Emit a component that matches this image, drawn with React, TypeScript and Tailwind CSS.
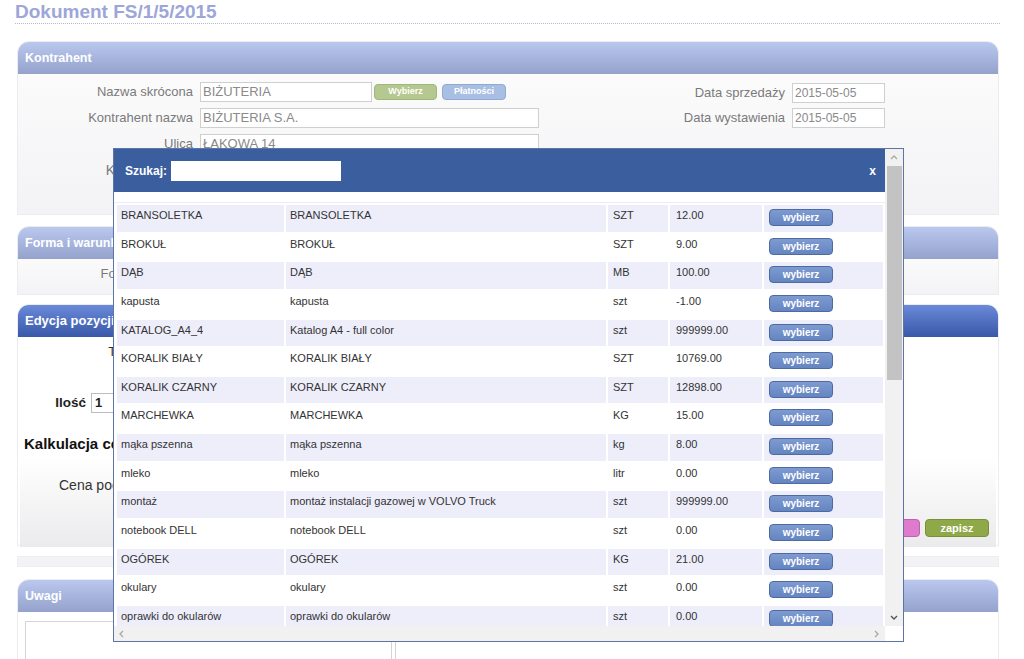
import React from 'react'

const produkty = [
  ['BRANSOLETKA', 'BRANSOLETKA', 'SZT', '12.00'],
  ['BROKUŁ', 'BROKUŁ', 'SZT', '9.00'],
  ['DĄB', 'DĄB', 'MB', '100.00'],
  ['kapusta', 'kapusta', 'szt', '-1.00'],
  ['KATALOG_A4_4', 'Katalog A4 - full color', 'szt', '999999.00'],
  ['KORALIK BIAŁY', 'KORALIK BIAŁY', 'SZT', '10769.00'],
  ['KORALIK CZARNY', 'KORALIK CZARNY', 'SZT', '12898.00'],
  ['MARCHEWKA', 'MARCHEWKA', 'KG', '15.00'],
  ['mąka pszenna', 'mąka pszenna', 'kg', '8.00'],
  ['mleko', 'mleko', 'litr', '0.00'],
  ['montaż', 'montaż instalacji gazowej w VOLVO Truck', 'szt', '999999.00'],
  ['notebook DELL', 'notebook DELL', 'szt', '0.00'],
  ['OGÓREK', 'OGÓREK', 'KG', '21.00'],
  ['okulary', 'okulary', 'szt', '0.00'],
  ['oprawki do okularów', 'oprawki do okularów', 'szt', '0.00'],
]

function Naglowek({ tytul, ciemny }: { tytul: string; ciemny?: boolean }) {
  return (
    <div
      className={`h-[32px] rounded-t-[11px] flex items-center pl-[7px] text-white font-bold ${
        ciemny
          ? 'bg-linear-to-b from-[#6a89d8] to-[#3a58a8] text-[13px]'
          : 'bg-linear-to-b from-[#bac8f0] to-[#95a3cc] text-[12.5px]'
      }`}
    >
      {tytul}
    </div>
  )
}

function Pole({ etykieta, wartosc, szer, duza }: { etykieta: string; wartosc: string; szer: string; duza?: boolean }) {
  return (
    <div className="flex items-center h-[20px]">
      <span className={`w-[182px] text-right text-[#7a7a7a] pr-[7px] ${duza ? 'text-[14px]' : 'text-[13px]'}`}>{etykieta}</span>
      <div className={`${szer} h-[20px] border border-[#cfcfcf] bg-white text-[13px] leading-[18px] text-[#8a8a8a] pl-[2px]`}>
        {wartosc}
      </div>
    </div>
  )
}

function Strzalka({ kier }: { kier: 'up' | 'down' | 'left' | 'right' }) {
  const d = {
    up: 'M1 5 L4 2 L7 5',
    down: 'M1 2 L4 5 L7 2',
    left: 'M5 1 L2 4 L5 7',
    right: 'M2 1 L5 4 L2 7',
  }[kier]
  return (
    <svg width="8" height="8" viewBox="0 0 8 8">
      <path d={d} fill="none" stroke={kier === 'down' ? '#505050' : '#a8a8a8'} strokeWidth="1.3" />
    </svg>
  )
}

export default function App() {
  return (
    <div className="relative h-[659px] overflow-hidden bg-white font-['Liberation_Sans',Arial,sans-serif]">
      {/* Tytuł */}
      <div className="ml-[15px] w-[985px] pt-[1px]">
        <h1 className="text-[19px] leading-[22px] font-bold text-[#9ca6d8] border-b border-dotted border-[#b4b8d0]">
          Dokument FS/1/5/2015
        </h1>
      </div>

      <div className="ml-[17px] w-[982px]">
        {/* Kontrahent */}
        <div className="mt-[17px] border border-[#ececf0] rounded-t-[12px]">
          <Naglowek tytul="Kontrahent" />
          <div className="h-[140px] bg-linear-to-b from-[#fbfbfc] to-[#f3f3f5] flex">
            <div className="w-[590px] pt-[8px] flex flex-col gap-[6px]">
              <div className="flex items-center">
                <Pole etykieta="Nazwa skrócona" wartosc="BIŻUTERIA" szer="w-[172px]" />
                <button className="ml-[2px] w-[63px] h-[16px] rounded-[4px] border border-[#a2b67c] bg-[#b5c88f] text-white font-bold text-[9px]">
                  Wybierz
                </button>
                <button className="ml-[5px] w-[64px] h-[16px] rounded-[4px] border border-[#91aad2] bg-[#a8bfe3] text-white font-bold text-[9px]">
                  Płatności
                </button>
              </div>
              <Pole etykieta="Kontrahent nazwa" wartosc="BIŻUTERIA S.A." szer="w-[339px]" />
              <Pole etykieta="Ulica" wartosc="ŁĄKOWA 14" szer="w-[339px]" />
              <Pole etykieta="Kod pocztowy" wartosc="00-950" szer="w-[80px]" duza />
              <Pole etykieta="NIP" wartosc="" szer="w-[160px]" />
            </div>
            <div className="pt-[9px] flex flex-col gap-[5px]">
              <div className="flex items-center h-[20px]">
                <span className="w-[184px] text-right pr-[7px] text-[13px] text-[#7a7a7a]">Data sprzedaży</span>
                <div className="w-[93px] h-[20px] border border-[#cfcfcf] bg-white text-[12px] leading-[18px] text-[#8a8a8a] pl-[2px]">
                  2015-05-05
                </div>
              </div>
              <div className="flex items-center h-[20px]">
                <span className="w-[184px] text-right pr-[7px] text-[13px] text-[#7a7a7a]">Data wystawienia</span>
                <div className="w-[93px] h-[20px] border border-[#cfcfcf] bg-white text-[12px] leading-[18px] text-[#8a8a8a] pl-[2px]">
                  2015-05-05
                </div>
              </div>
            </div>
          </div>
        </div>

        {/* Forma i warunki */}
        <div className="mt-[11px] border border-[#ececf0] rounded-t-[12px]">
          <Naglowek tytul="Forma i warunki płatności" />
          <div className="h-[35px] bg-linear-to-b from-[#fbfbfc] to-[#f3f3f5] pt-[5px]">
            <Pole etykieta="Forma płatności" wartosc="przelew" szer="w-[120px]" />
          </div>
        </div>

        {/* Edycja pozycji */}
        <div className="mt-[9px] border border-[#ececf0] rounded-t-[12px]">
          <Naglowek tytul="Edycja pozycji" ciemny />
          <div className="h-[208px] bg-white pt-[5px]">
            <div className="flex items-center h-[20px]">
              <span className="w-[132px] text-right pr-[7px] text-[13px] text-[#333]">Towar</span>
              <div className="w-[300px] h-[20px] border border-[#cfcfcf]" />
            </div>
            <div className="flex items-center h-[20px] mt-[31px]">
              <span className="w-[73px] text-right pr-[5px] text-[13.5px] font-bold text-[#222]">Ilość</span>
              <div className="w-[60px] h-[20px] border border-[#bdbdbd] text-[13px] font-bold leading-[18px] pl-[3px] text-[#222]">
                1
              </div>
            </div>
            <h3 className="ml-[6px] mt-[21px] text-[15px] leading-[20px] font-bold text-[#111]">Kalkulacja ceny</h3>
            <div className="mt-[3px] mx-[2px] h-[90px] bg-linear-to-b from-[#ffffff] to-[#ebebed]">
              <div className="pl-[39px] pt-[18px] text-[14px] text-[#333]">Cena początkowa</div>
              <div className="flex justify-end gap-[5px] pr-[7px] mt-[23px]">
                <button className="w-[64px] h-[18px] rounded-[4px] border border-[#c25fae] bg-[#de7bcc] text-white font-bold text-[11px]">
                  anuluj
                </button>
                <button className="w-[64px] h-[18px] rounded-[4px] border border-[#7a9036] bg-[#8fa848] text-white font-bold text-[11px]">
                  zapisz
                </button>
              </div>
            </div>
          </div>
        </div>

        <div className="mt-[10px] h-[11px] bg-[#f3f3f5] border border-[#eeeef1]" />

        {/* Uwagi */}
        <div className="mt-[12px] border border-[#ececf0] rounded-t-[12px]">
          <Naglowek tytul="Uwagi" />
          <div className="h-[80px] bg-white pt-[9px] pl-[7px] flex gap-[3px]">
            <div className="w-[367px] h-[70px] border border-[#d4d4d4]" />
            <div className="w-[360px] h-[70px] border-l border-[#d4d4d4]" />
          </div>
        </div>
      </div>

      {/* Okno wyboru towaru */}
      <div className="absolute left-[113px] top-[148px] w-[791px] h-[494px] border border-[#5c74a6] bg-white flex flex-col">
        <div className="flex h-[477px]">
          <div className="w-[771px] overflow-hidden">
            <div className="h-[43px] bg-[#3b5e9e] flex items-center pl-[11px] pr-[9px]">
              <span className="text-white font-bold text-[12px]">Szukaj:</span>
              <div className="ml-[4px] w-[170px] h-[20px] bg-white" />
              <span className="ml-auto text-white font-bold text-[12px]">x</span>
            </div>
            <div className="mt-[10px] h-px bg-[#eceef3]" />
            <table className="ml-[1px] border-separate border-spacing-[2px] text-[11px] text-[#333]">
              <tbody>
                {produkty.map((p, i) => (
                  <tr key={i} className={i % 2 === 0 ? 'bg-[#eeeefb]' : 'bg-white'}>
                    <td className="w-[167px] h-[26.65px] align-top pt-[4px] pl-[4px] leading-[12px]">{p[0]}</td>
                    <td className="w-[320px] h-[26.65px] align-top pt-[4px] pl-[4px] leading-[12px]">{p[1]}</td>
                    <td className="w-[60px] h-[26.65px] align-top pt-[4px] pl-[5px] leading-[12px]">{p[2]}</td>
                    <td className="w-[92px] h-[26.65px] align-top pt-[4px] pl-[6px] leading-[12px]">{p[3]}</td>
                    <td className="w-[119px] h-[26.65px] align-top pt-[4px] pl-[5px]">
                      <button className="block w-[64px] h-[17px] rounded-[4px] border border-[#4d6aa3] bg-linear-to-b from-[#7e9bd1] to-[#6585c1] text-white font-bold text-[10px] leading-[15px]">
                        wybierz
                      </button>
                    </td>
                  </tr>
                ))}
              </tbody>
            </table>
          </div>
          {/* pionowy pasek przewijania */}
          <div className="w-[18px] bg-[#f1f1f1] flex flex-col items-center">
            <div className="h-[17px] flex items-center justify-center">
              <Strzalka kier="up" />
            </div>
            <div className="w-[15px] h-[214px] bg-[#c3c3c3]" />
            <div className="mt-auto h-[17px] flex items-center justify-center">
              <Strzalka kier="down" />
            </div>
          </div>
        </div>
        {/* poziomy pasek przewijania */}
        <div className="flex h-[15px]">
          <div className="w-[771px] bg-[#f1f1f1] flex items-center justify-between px-[4px]">
            <Strzalka kier="left" />
            <Strzalka kier="right" />
          </div>
          <div className="w-[18px] bg-white" />
        </div>
      </div>
    </div>
  )
}
